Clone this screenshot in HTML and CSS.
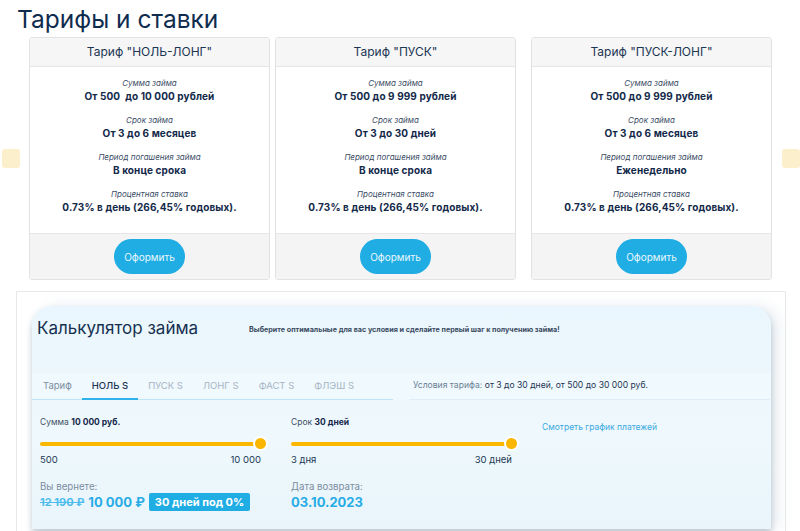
FILE: index.html
```html
<!DOCTYPE html>
<html lang="ru">
<head>
<meta charset="utf-8">
<link rel="stylesheet" href="styles.css">
</head>
<body>
<h1 class="title">Тарифы и ставки</h1>
<div class="slider">
  <span class="nav nav-left"></span>
  <div class="cards">
    <div class="card c1">
      <div class="card-head">Тариф "НОЛЬ-ЛОНГ"</div>
      <div class="card-body">
        <div class="item"><div class="lbl">Сумма займа</div><div class="val">От 500&nbsp; до 10 000 рублей</div></div>
        <div class="item"><div class="lbl">Срок займа</div><div class="val">От 3 до 6 месяцев</div></div>
        <div class="item"><div class="lbl">Период погашения займа</div><div class="val">В конце срока</div></div>
        <div class="item"><div class="lbl">Процентная ставка</div><div class="val">0.73% в день (266,45% годовых).</div></div>
      </div>
      <div class="card-foot"><span class="btn">Оформить</span></div>
    </div>
    <div class="card c2">
      <div class="card-head">Тариф "ПУСК"</div>
      <div class="card-body">
        <div class="item"><div class="lbl">Сумма займа</div><div class="val">От 500 до 9 999 рублей</div></div>
        <div class="item"><div class="lbl">Срок займа</div><div class="val">От 3 до 30 дней</div></div>
        <div class="item"><div class="lbl">Период погашения займа</div><div class="val">В конце срока</div></div>
        <div class="item"><div class="lbl">Процентная ставка</div><div class="val">0.73% в день (266,45% годовых).</div></div>
      </div>
      <div class="card-foot"><span class="btn">Оформить</span></div>
    </div>
    <div class="card c3">
      <div class="card-head">Тариф "ПУСК-ЛОНГ"</div>
      <div class="card-body">
        <div class="item"><div class="lbl">Сумма займа</div><div class="val">От 500 до 9 999 рублей</div></div>
        <div class="item"><div class="lbl">Срок займа</div><div class="val">От 3 до 6 месяцев</div></div>
        <div class="item"><div class="lbl">Период погашения займа</div><div class="val">Еженедельно</div></div>
        <div class="item"><div class="lbl">Процентная ставка</div><div class="val">0.73% в день (266,45% годовых).</div></div>
      </div>
      <div class="card-foot"><span class="btn">Оформить</span></div>
    </div>
  </div>
  <span class="nav nav-right"></span>
</div>

<div class="calc-wrap">
  <div class="calc">
    <div class="calc-head">
      <h2 class="calc-title">Калькулятор займа</h2>
      <p class="calc-sub">Выберите оптимальные для вас условия и сделайте первый шаг к получению займа!</p>
    </div>
    <div class="tabs-row">
      <div class="tabs">
        <span class="tab tab-label">Тариф</span>
        <span class="tab active">НОЛЬ S</span>
        <span class="tab">ПУСК S</span>
        <span class="tab">ЛОНГ S</span>
        <span class="tab">ФАСТ S</span>
        <span class="tab">ФЛЭШ S</span>
      </div>
      <div class="terms"><span class="terms-lbl">Условия тарифа:</span> от 3 до 30 дней, от 500 до 30 000 руб.</div>
    </div>
    <div class="calc-body">
      <div class="col">
        <div class="field-lbl">Сумма <b>10 000 руб.</b></div>
        <div class="range"><div class="track"></div><span class="thumb"></span></div>
        <div class="range-vals"><span>500</span><span>10 000</span></div>
        <div class="res-lbl">Вы вернете:</div>
        <div class="res"><s class="old">12 190 ₽</s><span class="sum">10 000 ₽</span><span class="badge">30 дней под 0%</span></div>
      </div>
      <div class="col">
        <div class="field-lbl">Срок <b>30 дней</b></div>
        <div class="range"><div class="track"></div><span class="thumb"></span></div>
        <div class="range-vals"><span>3 дня</span><span>30 дней</span></div>
        <div class="res-lbl">Дата возврата:</div>
        <div class="res"><span class="sum">03.10.2023</span></div>
      </div>
      <div class="col-link">
        <a class="schedule">Смотреть график платежей</a>
      </div>
    </div>
  </div>
</div>
</body>
</html>
```

FILE: styles.css
```css
* { box-sizing: border-box; }
html, body { margin: 0; padding: 0; background: #fff; }
body { font-family: Inter, "Noto Sans", sans-serif; color: #16304f; overflow: hidden; height: 531px; }

.title {
  margin: 0;
  padding: 3px 0 0 17px;
  font-size: 24.5px;
  line-height: 32px;
  font-weight: 400;
  color: #0f2c4f;
}

.slider { display: flex; align-items: center; position: relative; height: 245px; margin-top: 2px; }
.nav { position: absolute; top: 112px; width: 18px; height: 19px; background: #fcefcb; border-radius: 3px; }
.nav-left { left: 2px; }
.nav-right { left: 782px; }

.cards { display: flex; padding-left: 29px; align-self: flex-start; }
.card {
  width: 241px;
  height: 243px;
  border: 1px solid #e2e2e2;
  border-radius: 3px;
  display: flex;
  flex-direction: column;
  background: #fff;
}
.c2 { margin-left: 5px; }
.c3 { margin-left: 15px; }

.card-head {
  height: 29px;
  background: #f6f6f6;
  border-bottom: 1px solid #e6e6e6;
  text-align: center;
  font-size: 12px;
  line-height: 28px;
  color: #1b3553;
}
.card-body { flex: 1; padding-top: 10px; text-align: center; }
.item { margin-bottom: 11px; }
.lbl { font-size: 8px; font-style: italic; color: #3b4d66; line-height: 13px; }
.val { font-size: 10px; font-weight: 700; color: #13294a; line-height: 13px; letter-spacing: 0.1px; }

.card-foot {
  height: 46px;
  background: #f4f4f4;
  border-top: 1px solid #e6e6e6;
  display: flex;
  justify-content: center;
  align-items: center;
}
.btn {
  width: 71px;
  height: 35px;
  border-radius: 18px;
  background: #1fade4;
  color: #eaf7fd;
  font-size: 10px;
  display: flex;
  align-items: center;
  justify-content: center;
}

.calc-wrap {
  margin: 9px 0 0 16px;
  width: 770px;
  height: 260px;
  border: 1px solid #e8e8e8;
  padding: 14px 0 0 15px;
}
.calc {
  width: 739px;
  height: 223px;
  background: linear-gradient(#eaf6fd, #eef8fd 60%, #e9f5fb);
  border-radius: 20px 20px 0 0;
  box-shadow: 0 4px 6px rgba(120, 140, 160, 0.45), 8px 0 14px rgba(220, 228, 235, 0.6);
}
.calc-head { display: flex; align-items: center; padding: 5px 0 0 5px; height: 39px; }
.calc-title { margin: 0; font-size: 17px; font-weight: 400; color: #16304f; line-height: 24px; }
.calc-sub { margin: 0 0 0 51px; font-size: 7.2px; font-weight: 700; color: #3b4b60; padding-top: 2px; }

.tabs-row { display: flex; margin-top: 28px; height: 27px; background: #eff9fe; }
.tabs { width: 361px; flex-shrink: 0; display: flex; border-bottom: 1px solid #bfe6f8; padding-left: 11px; }
.tab { font-size: 9.5px; color: #a7b4c2; line-height: 25px; margin-right: 20px; white-space: nowrap; }
.tab-label { color: #7d8ea0; margin-right: 20px; }
.tab.active { color: #1d3656; font-weight: 500; border-bottom: 2px solid #2fb3ea; margin-bottom: -1px; padding: 0 10px; margin-left: -10px; margin-right: 10px; }
.terms { flex: 1; margin-left: 16px; margin-right: 1px; font-size: 8.6px; line-height: 25px; color: #1f3553; border-bottom: 1px solid #dfeef6; padding-left: 4px; white-space: nowrap; }
.terms-lbl { color: #6c7f94; }

.calc-body { display: flex; padding: 14px 0 0 8px; }
.col { width: 221px; flex-shrink: 0; margin-right: 30px; }
.field-lbl { font-size: 8.5px; color: #3f4f63; line-height: 16px; }
.field-lbl b { color: #15284a; }
.range { position: relative; height: 16px; margin-top: 6px; }
.track { position: absolute; left: 0; right: 0; top: 6px; height: 4px; background: #fbb600; border-radius: 2px; }
.thumb { position: absolute; right: -7px; top: 0; width: 15px; height: 15px; border-radius: 50%; background: #fbb600; border: 2.5px solid #fff; }
.range-vals { display: flex; justify-content: space-between; font-size: 9.5px; color: #223955; line-height: 14px; margin-top: 1px; }
.res-lbl { margin-top: 13px; font-size: 9.7px; color: #7b8ca0; line-height: 14px; }
.res { display: flex; align-items: center; margin-top: -3px; height: 22px; white-space: nowrap; }
.old { font-size: 11px; font-weight: 700; color: #4fbdec; margin-right: 4px; }
.sum { font-size: 13px; font-weight: 700; color: #27ace5; }
.badge { background: #1fade4; color: #fff; font-size: 11px; font-weight: 700; padding: 2px 6px; border-radius: 2px; margin-left: 4px; line-height: 14px; }

.col-link { padding-top: 0; }
.schedule { font-size: 8.5px; color: #3aa9e0; white-space: nowrap; }
```
